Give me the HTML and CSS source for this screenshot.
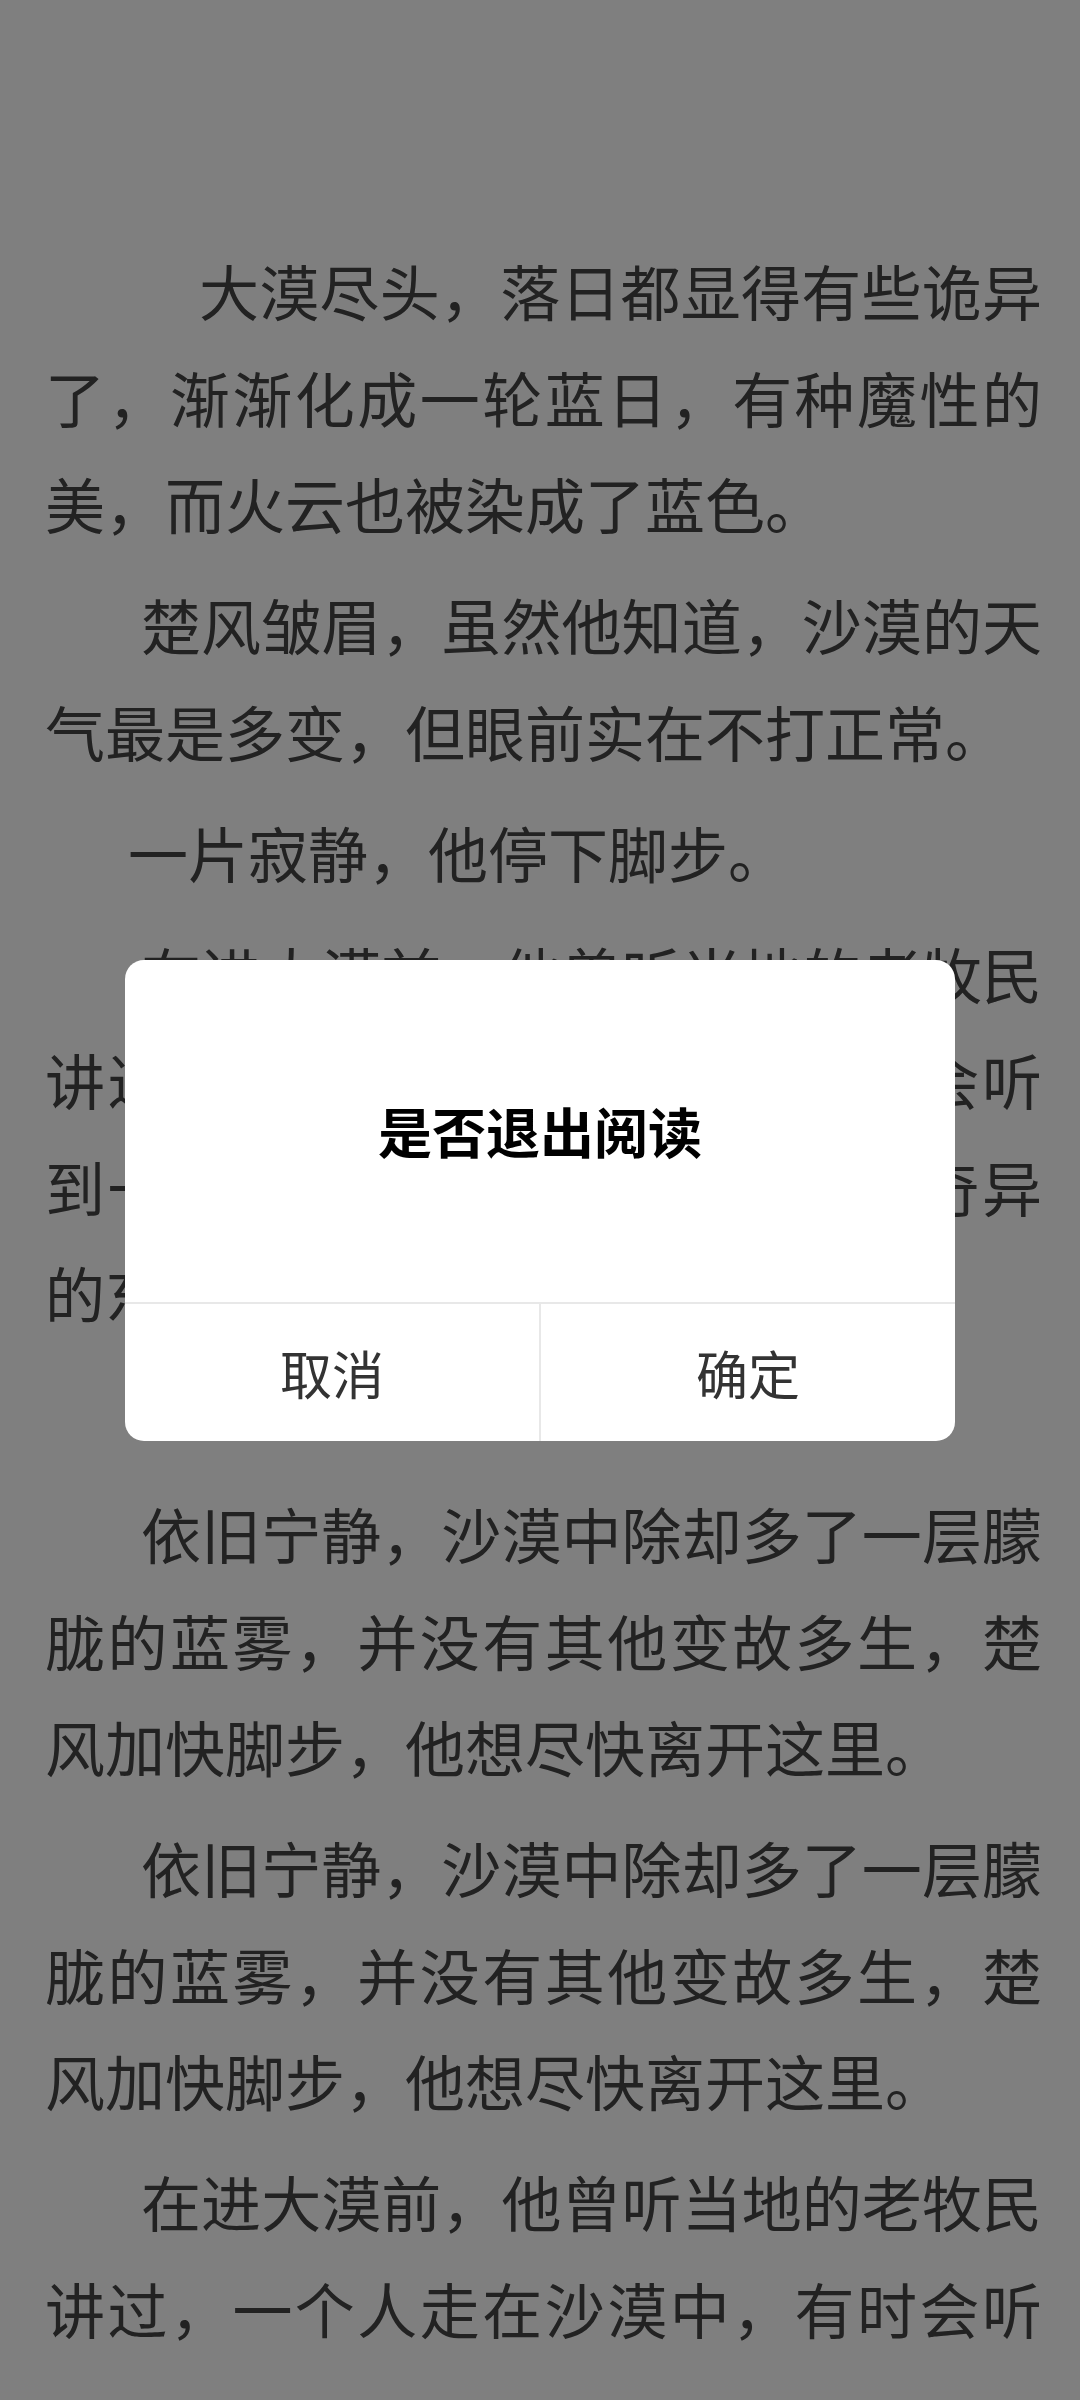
FILE: index.html
```html
<!DOCTYPE html>
<html lang="zh-CN">
<head>
    <meta charset="UTF-8">
    <meta name="viewport" content="width=device-width, initial-scale=1.0">
    <title>阅读</title>
<link rel="stylesheet" href="styles.css">
</head>
<body>

    <main class="reader">
        <p class="para para-lead">大漠尽头，落日都显得有些诡异了，渐渐化成一轮蓝日，有种魔性的美，而火云也被染成了蓝色。</p>
        <p class="para">楚风皱眉，虽然他知道，沙漠的天气最是多变，但眼前实在不打正常。</p>
        <p class="para para-short">一片寂静，他停下脚步。</p>
        <p class="para">在进大漠前，他曾听当地的老牧民讲过，一个人走在沙漠中，有时会听到一阵奇怪的声音，甚至能看见奇异的东西，那是沙漠里的幻象。</p>
        <!-- blank line between sections -->
        <p class="para section-gap">依旧宁静，沙漠中除却多了一层朦胧的蓝雾，并没有其他变故多生，楚风加快脚步，他想尽快离开这里。</p>
        <p class="para">依旧宁静，沙漠中除却多了一层朦胧的蓝雾，并没有其他变故多生，楚风加快脚步，他想尽快离开这里。</p>
        <!-- continues on the next page -->
        <p class="para para-cont">在进大漠前，他曾听当地的老牧民讲过，一个人走在沙漠中，有时会听</p>
    </main>

    <!-- exit confirm -->
    <div class="mask">
        <div class="dialog">
            <div class="dialog-title">是否退出阅读</div>
            <div class="dialog-actions">
                <button class="dialog-btn" id="cancelBtn">取消</button>
                <button class="dialog-btn" id="okBtn">确定</button>
            </div>
        </div>
    </div>

</body>
</html>
```

FILE: styles.css
```css
/* Basic reset */
* {
    margin: 0;
    padding: 0;
    box-sizing: border-box;
}

body {
    font-family: "Noto Sans CJK SC", "Noto Sans", sans-serif;
    background-color: #fff;
    color: #444;
}

.reader {
    height: 100vh;
    overflow: hidden;
    padding: 237px 38px 0 45px;
}

.para {
    font-size: 60px;
    line-height: 106.5px;
    text-align: justify;
    text-indent: 96px;
    margin-bottom: 14.5px;
}

.para-lead {
    text-indent: 154px;
}

.para-short {
    text-indent: 83px;
}

.para-cont {
    text-align-last: justify;
}

/* one empty line + normal paragraph gap */
.section-gap {
    margin-top: 134.5px;
}

.mask {
    position: fixed;
    top: 0;
    left: 0;
    width: 100%;
    height: 100%;
    background-color: rgba(0, 0, 0, 0.5);
    display: flex;
    justify-content: center;
    align-items: center;
}

.dialog {
    width: 830px;
    background-color: #fff;
    border-radius: 19px;
    overflow: hidden;
}

.dialog-title {
    height: 342px;
    display: flex;
    justify-content: center;
    align-items: center;
    font-size: 54px;
    font-weight: bold;
    color: #000;
}

.dialog-actions {
    display: flex;
    border-top: 2px solid #e8e8e8;
}

.dialog-btn {
    flex: 1;
    height: 137px;
    background: none;
    border: none;
    font-family: inherit;
    font-size: 52px;
    color: #333;
    cursor: pointer;
}

.dialog-btn + .dialog-btn {
    border-left: 2px solid #e8e8e8;
}
```
